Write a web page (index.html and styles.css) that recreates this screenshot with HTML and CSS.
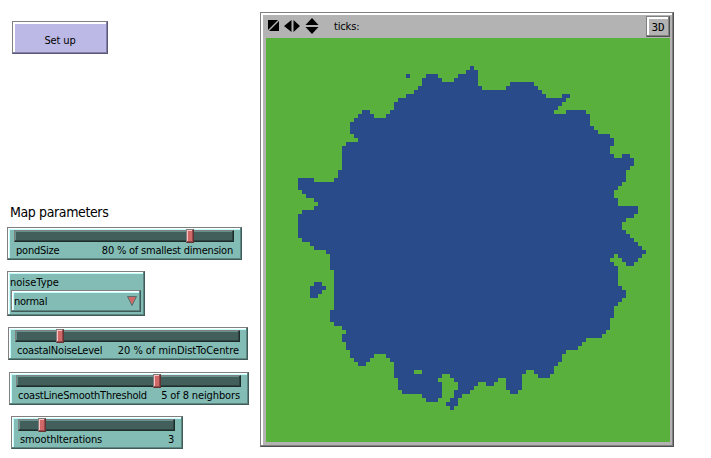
FILE: index.html
```html
<!DOCTYPE html>
<html lang="en">
<head>
<meta charset="utf-8">
<title>Pond model</title>
<link rel="stylesheet" href="styles.css">
</head>
<body>
<main class="interface">
  <section class="controls">
    <button class="setup" type="button"><span>Set up</span></button>
    <h1 class="heading">Map parameters</h1>
    <div class="widget slider pond">
      <div class="track"><i class="thumb"></i></div>
      <div class="caption"><span class="name">pondSize</span><span class="value">80 % of smallest dimension</span></div>
    </div>
    <div class="widget chooser">
      <div class="label">noiseType</div>
      <div class="choice"><span>normal</span>
        <svg class="arrow" width="10" height="10" viewBox="0 0 10 10"><path d="M.5 .5H9.5L5 9.5Z" fill="#d06868" stroke="#55706c"/></svg>
      </div>
    </div>
    <div class="widget slider coastal">
      <div class="track"><i class="thumb"></i></div>
      <div class="caption"><span class="name">coastalNoiseLevel</span><span class="value">20 % of minDistToCentre</span></div>
    </div>
    <div class="widget slider threshold">
      <div class="track"><i class="thumb"></i></div>
      <div class="caption"><span class="name">coastLineSmoothThreshold</span><span class="value">5 of 8 neighbors</span></div>
    </div>
    <div class="widget slider iterations">
      <div class="track"><i class="thumb"></i></div>
      <div class="caption"><span class="name">smoothIterations</span><span class="value">3</span></div>
    </div>
  </section>
  <section class="view">
    <header class="toolbar">
      <svg class="tools" width="52" height="16" viewBox="0 0 52 16">
        <path d="M0 2H10L0 12ZM11 3V13H1ZM23.500 2V14L16 8ZM25.500 2V14L32 8ZM37.500 7L44 0L50.500 7ZM37.500 9L44 16L50.500 9Z"/>
      </svg>
      <span class="ticks">ticks:</span>
      <button class="three-d" type="button"><span>3D</span></button>
    </header>
    <svg class="world" width="404" height="404" viewBox="266 38 404 404" shape-rendering="crispEdges">
      <rect x="266" y="38" width="404" height="404" fill="#59b03c"/>
      <path fill="#294b89" fill-rule="evenodd" d="M350 122H354V118H358V114H362V110H370V114H374V118H386V114H390V110H394V102H398V98H406V94H414V90H418V86H422V78H426V74H438V78H442V82H454V78H458V74H466V70H470V66H474V70H478V86H482V90H506V86H510V82H534V86H538V90H542V94H546V98H562V94H570V98H566V102H562V106H558V110H554V114H566V110H586V114H590V126H594V130H598V134H610V138H614V146H610V154H614V158H622V154H630V158H634V166H630V170H626V182H622V186H618V190H614V198H618V206H638V214H634V218H626V222H622V230H626V234H630V238H634V242H638V246H642V250H646V254H642V258H638V262H634V266H626V262H622V258H618V254H614V258H610V262H614V266H618V286H622V290H626V298H622V302H618V306H614V318H610V330H606V334H602V338H586V342H582V346H578V350H566V354H562V362H558V366H554V374H550V378H538V374H534V370H526V374H522V390H518V394H510V390H506V378H498V382H494V386H486V382H478V386H474V390H470V394H462V398H458V406H454V410H450V406H446V402H450V398H454V390H458V382H454V378H450V374H442V378H438V382H442V398H438V402H426V398H422V394H402V390H398V378H394V362H390V358H386V354H374V358H370V362H366V366H358V362H354V358H350V350H346V342H342V334H346V330H342V326H334V322H330V310H334V270H330V254H326V250H314V246H310V242H302V238H298V214H302V210H314V206H318V202H314V198H306V194H302V190H298V178H314V182H334V178H338V170H342V146H346V142H358V138H354V134H350ZM414 370H422V374H414ZM406 74H410V78H406ZM314 282H322V286H326V290H322V294H318V298H310V286H314Z"/>
    </svg>
  </section>
</main>
</body>
</html>
```
FILE: styles.css
```css
* { box-sizing: border-box; }
body {
  margin: 0;
  width: 711px;
  height: 458px;
  overflow: hidden;
  background: #fff;
  color: #000;
  font: 11px/13px "DejaVu Sans Condensed", "DejaVu Sans", sans-serif;
}
.interface { display: flex; align-items: flex-start; }
.controls { width: 260px; padding-top: 21px; display: flex; flex-direction: column; align-items: flex-start; }
button { font: inherit; color: inherit; padding: 0; }
.setup {
  width: 96px;
  height: 33px;
  margin-left: 12px;
  border: 1px solid #808080;
  border-right-color: #5a5878;
  border-bottom-color: #5a5878;
  background: #bcb9e6;
  box-shadow: inset -1px -1px #8280a4, inset 2px 2px #fff;
  padding-top: 5px;
  letter-spacing: -0.15px;
}
.heading {
  margin: 149px 0 0 10px;
  height: 24px;
  font-size: 14px;
  font-weight: 400;
  line-height: 18px;
  letter-spacing: -0.38px;
  white-space: nowrap;
}
.widget {
  background: #82bcb5;
  border: 1px solid #808080;
  border-right-color: #3f5c58;
  border-bottom-color: #3f5c58;
  box-shadow: inset -1px -1px #5b8681, inset 1px 1px #fff, inset 2px 2px #c4ffff;
}
.slider { height: 33px; padding: 2px 7px 0 6px; }
.track {
  height: 12px;
  position: relative;
  background: #425f5c;
  border: 1px solid #808080;
  border-right-color: #1d2d2b;
  border-bottom-color: #1d2d2b;
  box-shadow: inset -1px -1px #2e4340, inset 1px 1px #67918c;
}
.thumb {
  position: absolute;
  top: -2px;
  width: 8px;
  height: 14px;
  background: #d06868;
  border: 1px solid #808080;
  border-right-color: #643232;
  border-bottom-color: #643232;
  box-shadow: inset -1px -1px #924848, inset 1px 1px #ffc0c0;
}
.caption {
  display: flex;
  justify-content: space-between;
  padding: 2px 1px 0 2px;
  letter-spacing: -0.22px;
  white-space: nowrap;
}
.pond { width: 235px; margin: 0 0 11px 7px; }
.pond .thumb { left: 171px; }
.coastal { width: 240px; margin: 0 0 12px 8px; }
.coastal .thumb { left: 40px; }
.coastal .value { letter-spacing: -0.05px; }
.threshold { width: 240px; margin: 0 0 11px 9px; }
.threshold .thumb { left: 136px; }
.threshold .value { letter-spacing: -0.12px; }
.iterations { width: 172px; margin-left: 11px; }
.iterations .thumb { left: 19px; }
.iterations .name { letter-spacing: -0.13px; }
.chooser { width: 138px; height: 45px; margin: 0 0 11px 7px; padding: 4px 3px 0; }
.label { height: 14px; margin-left: -1px; }
.choice {
  width: 130px;
  height: 22px;
  padding: 0 3px 0 2px;
  display: flex;
  justify-content: space-between;
  align-items: center;
  letter-spacing: -0.25px;
  border: 1px solid #808080;
  border-right-color: #3f5c58;
  border-bottom-color: #3f5c58;
  box-shadow: inset -1px -1px #5b8681, inset 1px 1px #fff, inset 2px 2px #c4ffff;
}
.view {
  width: 414px;
  height: 435px;
  margin-top: 12px;
  padding: 2px 2px 2px 5px;
  background: #b3b3b3;
  border: 1px solid #808080;
  border-right-color: #505050;
  border-bottom-color: #505050;
  box-shadow: inset -1px -1px #808080, inset 2px 2px #fff;
}
.toolbar { height: 23px; padding: 1px 0 0 2px; display: flex; align-items: flex-start; }
.tools { margin-top: 2px; }
.ticks { margin: 4px 0 0 14px; letter-spacing: -0.15px; }
.three-d {
  width: 24px;
  height: 21px;
  margin-left: auto;
  margin-right: 1px;
  padding-top: 2px;
  font-family: "DejaVu Sans Mono", monospace;
  background: #b3b3b3;
  border: 1px solid #808080;
  border-right-color: #505050;
  border-bottom-color: #505050;
  box-shadow: inset -1px -1px #808080, inset 2px 2px #fff;
}
.world { display: block; }
```
